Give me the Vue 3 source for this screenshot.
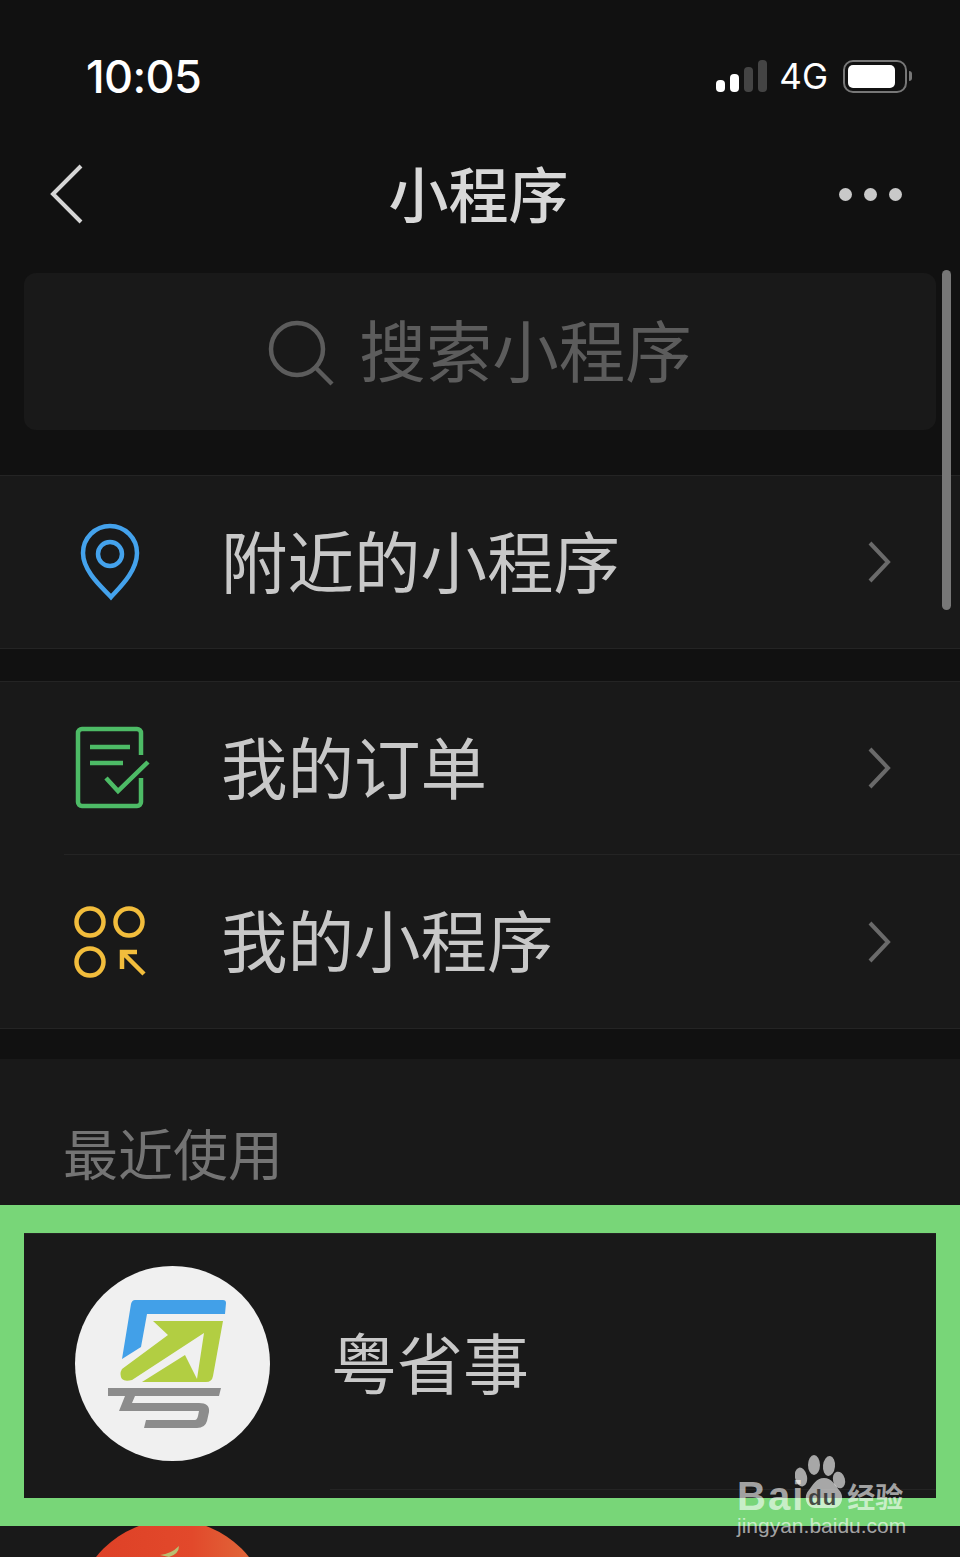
<template>
  <div class="page">
    <div class="status-bar">
      <span class="time">10:05</span>
      <div class="status-right">
        <div class="signal">
          <i class="on s1"></i><i class="on s2"></i><i class="s3"></i><i class="s4"></i>
        </div>
        <span class="net">4G</span>
        <div class="battery"><div class="battery-fill"></div></div>
        <div class="battery-cap"></div>
      </div>
    </div>

    <div class="nav">
      <svg class="back" width="34" height="60" viewBox="0 0 34 60">
        <path d="M31 2 L3 30 L31 58" fill="none" stroke="#d6d6d6" stroke-width="4" />
      </svg>
      <span class="nav-title">小程序</span>
      <div class="more"><i></i><i></i><i></i></div>
    </div>

    <div class="search">
      <svg width="66" height="66" viewBox="0 0 66 66">
        <circle cx="29" cy="29" r="26" fill="none" stroke="#5c5c5c" stroke-width="4.5" />
        <path d="M47 47 L64 64" stroke="#5c5c5c" stroke-width="4.5" fill="none" />
      </svg>
      <span>搜索小程序</span>
    </div>

    <div class="group first">
      <div v-for="item in nearby" :key="item.label" class="row">
        <div class="icon" v-html="item.icon"></div>
        <span class="label">{{ item.label }}</span>
        <svg class="chevron" width="24" height="42" viewBox="0 0 24 42">
          <path d="M3 2 L21 21 L3 40" fill="none" stroke="#6a6a6a" stroke-width="4" />
        </svg>
      </div>
    </div>

    <div class="group">
      <div v-for="item in mine" :key="item.label" class="row">
        <div class="icon" v-html="item.icon"></div>
        <span class="label">{{ item.label }}</span>
        <svg class="chevron" width="24" height="42" viewBox="0 0 24 42">
          <path d="M3 2 L21 21 L3 40" fill="none" stroke="#6a6a6a" stroke-width="4" />
        </svg>
      </div>
    </div>

    <div class="recent">
      <div class="recent-title">最近使用</div>
      <div class="app-row">
        <svg class="avatar" width="195" height="195" viewBox="0 0 195 195">
          <circle cx="97.5" cy="97.5" r="97.5" fill="#f0f0f0" />
          <path d="M60 34 H148 Q151 34 151 37 L150 48 H72 L66 81 L47 93 L56 38 Q57 34 60 34 Z" fill="#42a0e8" />
          <path d="M78 55 H148 L138 110 Q137 116 131 116 H67 L110 89 L122 113 L129 67 L57 114 Q50 116 47 113 Q44 108 47 103 L93 69 Z" fill="#b2ce42" />
          <path d="M33 122 H146 L144 130 H60 L57 137 H124 Q135 137 134 146 L132 155 Q130 162 122 162 H69 L71 154 H120 Q122 154 123 150 L124 145 H44 L50 130 H33 Z" fill="#8c8c8c" />
        </svg>
        <div class="app-body">
          <span class="app-name">粤省事</span>
        </div>
      </div>
      <div class="app-row next">
        <svg class="avatar" width="195" height="195" viewBox="0 0 195 195">
          <defs>
            <linearGradient id="apple" x1="0" y1="0" x2="1" y2="0">
              <stop offset="0" stop-color="#dd3f26" />
              <stop offset="0.6" stop-color="#e2492b" />
              <stop offset="1" stop-color="#e0703e" />
            </linearGradient>
          </defs>
          <circle cx="97.5" cy="97.5" r="97.5" fill="url(#apple)" />
          <path d="M85 35 Q96 34 104 26 Q104 34 94 37 Z" fill="#b9bf72" />
        </svg>
      </div>
    </div>

    <div class="scrollbar"></div>
    <div class="frame"></div>

    <div class="watermark">
      <svg class="paw" width="52" height="54" viewBox="0 0 52 54">
        <ellipse cx="6" cy="22" rx="6" ry="9.5" transform="rotate(-12 6 22)" />
        <ellipse cx="19" cy="10" rx="6" ry="10" />
        <ellipse cx="34" cy="11" rx="6" ry="10" transform="rotate(6 34 11)" />
        <ellipse cx="44" cy="25" rx="6" ry="8.5" transform="rotate(-15 44 25)" />
        <path d="M29 23 C37 23 40 30 44 35 C50 41 47 53 38 53 H20 C11 53 8 41 14 35 C18 30 21 23 29 23 Z" />
      </svg>
      <div class="wm-top">
        <span class="bai">Bai</span>
        <span class="du">du</span>
        <span class="jy">经验</span>
      </div>
      <div class="wm-url">jingyan.baidu.com</div>
    </div>
  </div>
</template>

<script setup>
const pin = `<svg width="92" height="100" viewBox="0 0 92 100" fill="none" stroke="#44a2ec" stroke-width="4.5">
  <path d="M47 85 C40 77 19 60 19 41 A27 27 0 0 1 73 41 C73 60 54 77 47 85 Z" />
  <circle cx="46" cy="42" r="12" />
</svg>`

const order = `<svg width="92" height="100" viewBox="0 0 92 100" fill="none" stroke="#4dbb66" stroke-width="4.5">
  <path d="M77 37 V15 a4 4 0 0 0 -4 -4 H18 a4 4 0 0 0 -4 4 V84 a4 4 0 0 0 4 4 H73 a4 4 0 0 0 4 -4 V60" />
  <path d="M26 29 H66 M26 45 H59" />
  <path d="M42 60 L54 73 L84 44" />
</svg>`

const apps = `<svg width="92" height="100" viewBox="0 0 92 100" fill="none" stroke="#f2bd3c" stroke-width="4.5">
  <circle cx="26" cy="30" r="13.5" />
  <circle cx="65" cy="30" r="13.5" />
  <circle cx="26" cy="70" r="13.5" />
  <path d="M58 77 V60 H73 M58 60 L80 82" />
</svg>`

const nearby = [{ label: '附近的小程序', icon: pin }]
const mine = [
  { label: '我的订单', icon: order },
  { label: '我的小程序', icon: apps }
]
</script>

<style>
html, body {
  background: #111111;
}
</style>

<style scoped>
.page {
  position: relative;
  width: 960px;
  height: 1557px;
  overflow: hidden;
  background: #111111;
  font-family: "Noto Sans CJK SC", "Liberation Sans", sans-serif;
  font-weight: 400;
}

.status-bar {
  height: 135px;
  box-sizing: border-box;
  padding: 17px 48px 0 86px;
  display: flex;
  justify-content: space-between;
  align-items: center;
}

.time {
  font-family: Inter, sans-serif;
  font-size: 45px;
  font-weight: 500;
  color: #fff;
  letter-spacing: -0.6px;
}

.status-right {
  display: flex;
  align-items: center;
}

.signal {
  display: flex;
  align-items: flex-end;
  gap: 5px;
  height: 32px;
}

.signal i {
  width: 9px;
  border-radius: 4px;
  background: #444;
}

.signal .on { background: #fff; }
.s1 { height: 12px; }
.s2 { height: 18px; }
.s3 { height: 25px; }
.s4 { height: 32px; }

.net {
  margin-left: 12px;
  font-family: Inter, sans-serif;
  font-size: 35px;
  font-weight: 400;
  color: #fff;
}

.battery {
  margin-left: 15px;
  width: 64px;
  height: 33px;
  box-sizing: border-box;
  border: 2.5px solid #777;
  border-radius: 10px;
  padding: 3px;
}

.battery-fill {
  height: 100%;
  width: 47px;
  background: #fff;
  border-radius: 5px;
}

.battery-cap {
  width: 3px;
  height: 10px;
  margin-left: 2px;
  background: #777;
  border-radius: 0 3px 3px 0;
}

.nav {
  height: 118px;
  padding: 0 58px 0 50px;
  display: flex;
  align-items: center;
  justify-content: space-between;
}

.nav-title {
  font-size: 60px;
  font-weight: 500;
  color: #d8d8d8;
  line-height: 1;
  margin-left: 34px;
  padding-bottom: 4px;
}

.more {
  display: flex;
  gap: 12px;
}

.more i {
  width: 13px;
  height: 13px;
  border-radius: 50%;
  background: #c9c9c9;
}

.search {
  margin: 20px 24px 45px;
  height: 157px;
  background: #191919;
  border-radius: 12px;
  display: flex;
  align-items: center;
  justify-content: center;
  gap: 25px;
  color: #5c5c5c;
  font-size: 66.5px;
}

.search span {
  padding-bottom: 8px;
}

.search svg {
  margin-top: 3px;
}

.group {
  background: #191919;
  border-top: 1px solid #242424;
  border-bottom: 1px solid #242424;
  margin-bottom: 30px;
}

.group.first {
  margin-bottom: 32px;
}

.row {
  height: 172px;
  margin-left: 64px;
  display: flex;
  align-items: center;
}

.row + .row {
  border-top: 1px solid #242424;
  height: 173px;
}

.icon {
  width: 92px;
  height: 100px;
  margin-right: 65px;
}

.label {
  flex: 1;
  font-size: 66.5px;
  line-height: 1;
  color: #c8c8c8;
  padding-bottom: 6px;
}

.chevron {
  margin-right: 69px;
}

.recent {
  background: #191919;
}

.recent-title {
  height: 175px;
  box-sizing: border-box;
  padding: 61px 0 0 63px;
  border-bottom: 1px solid #242424;
  font-size: 55px;
  line-height: 62px;
  color: #747474;
}

.app-row {
  height: 256px;
  box-sizing: border-box;
  padding-left: 75px;
  display: flex;
}

.avatar {
  flex: none;
  margin-top: 32px;
}

.next .avatar {
  margin-top: 30px;
}

.app-body {
  flex: 1;
  margin-left: 60px;
  border-bottom: 1px solid #242424;
  display: flex;
  align-items: center;
  padding-bottom: 3px;
}

.app-name {
  font-size: 66px;
  line-height: 68px;
  color: #c8c8c8;
  margin-left: 1px;
}

.scrollbar {
  position: absolute;
  left: 942px;
  top: 270px;
  width: 9px;
  height: 340px;
  border-radius: 5px;
  background: #777;
}

.frame {
  position: absolute;
  left: 0;
  top: 1205px;
  width: 960px;
  height: 321px;
  box-sizing: border-box;
  border: solid #78d678;
  border-width: 28px 24px;
}

.watermark {
  position: absolute;
  left: 737px;
  top: 1455px;
  width: 180px;
  color: rgba(255, 255, 255, 0.62);
  font-family: "Liberation Sans", sans-serif;
}

.paw {
  position: absolute;
  left: 58px;
  top: 0;
  fill: rgba(255, 255, 255, 0.62);
}

.wm-top {
  position: relative;
  padding-top: 19px;
  display: flex;
  align-items: center;
  height: 44px;
}

.bai {
  font-size: 40px;
  font-weight: 700;
  line-height: 44px;
  letter-spacing: 2px;
}

.du {
  margin-left: 3px;
  margin-top: 4px;
  font-size: 22px;
  font-weight: 700;
  line-height: 30px;
  letter-spacing: 1px;
  color: #262626;
  opacity: 0.8;
}

.jy {
  margin-left: 10px;
  font-family: "Noto Sans CJK SC", sans-serif;
  font-size: 28px;
  font-weight: 700;
  line-height: 44px;
}

.wm-url {
  font-size: 21px;
  line-height: 26px;
  margin-top: -5px;
}
</style>
